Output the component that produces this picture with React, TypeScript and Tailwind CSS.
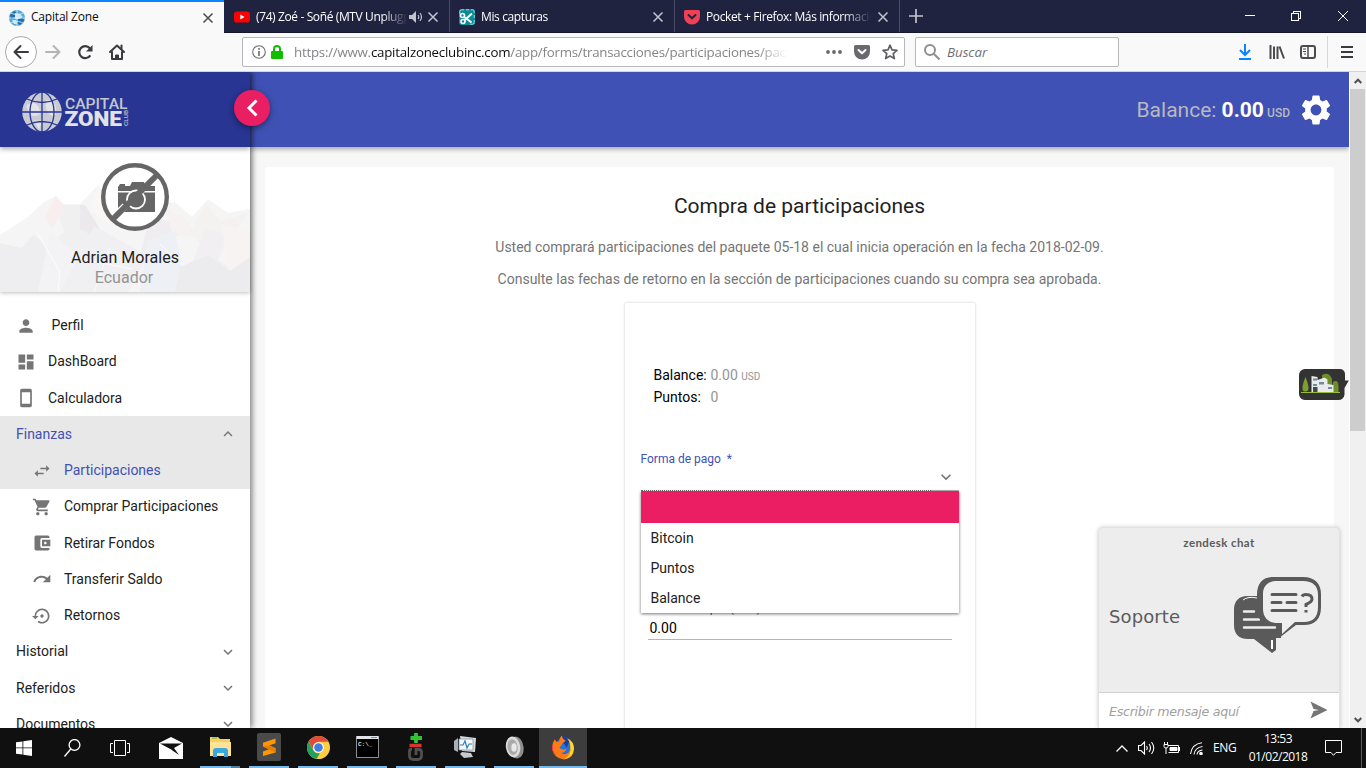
import type { ReactNode } from 'react';
import {
  MdAccountBalanceWallet,
  MdDashboard,
  MdExpandLess,
  MdExpandMore,
  MdPerson,
  MdRedo,
  MdSettings,
  MdSettingsBackupRestore,
  MdShoppingCart,
  MdStayCurrentPortrait,
  MdSwapHoriz,
} from 'react-icons/md';

function CloseIcon({ className }: { className: string }) {
  return (
    <svg viewBox="0 0 12 12" className={`h-3 w-3 shrink-0 ${className}`} fill="none" stroke="currentColor" strokeWidth="1.5">
      <path d="M1.5 1.5l9 9M10.5 1.5l-9 9" />
    </svg>
  );
}

function GlobeFavicon() {
  return (
    <svg viewBox="0 0 16 16" className="h-4 w-4 shrink-0">
      <circle cx="8" cy="8" r="8" fill="#5aa9d6" />
      <path d="M1 5l4-4 3 2-2 4-4 2zM9 9l5-2 1 4-4 4-3-2z" fill="#1f6fb0" />
      <path d="M6 3l5 1 3 3-4 2-4 0zM3 10l4 0 1 4-3 0z" fill="#c9e8f5" />
      <path d="M8 0v16M0 8h16M2 3c4 2 8 2 12 0M2 13c4-2 8-2 12 0" stroke="#e4f4fb" strokeWidth=".8" fill="none" />
    </svg>
  );
}

function YoutubeIcon() {
  return (
    <svg viewBox="0 0 16 12" className="h-3 w-4 shrink-0">
      <rect y=".5" width="16" height="11" rx="2.8" fill="#f00" />
      <path d="M6.3 3.5v5l4.2-2.5z" fill="#fff" />
    </svg>
  );
}

function ScreenshotIcon() {
  return (
    <svg viewBox="0 0 16 16" className="h-4 w-4 shrink-0">
      <rect width="16" height="16" rx="2.5" fill="#0b8a99" />
      <path d="M.8 5V2.5A1.7 1.7 0 0 1 2.500.8H5M7 .8h3M12 .8h1.500a1.700 1.700 0 0 1 1.700 1.700V4M15.200 6v3M15.200 11v2.500a1.700 1.700 0 0 1-1.700 1.700H11" stroke="#8fe0e6" strokeWidth="1" fill="none" />
      <circle cx="3.500" cy="6.500" r="2" fill="none" stroke="#fff" strokeWidth="1.600" />
      <circle cx="4" cy="12.500" r="2" fill="none" stroke="#fff" strokeWidth="1.600" />
      <path d="M5 7.800l7.500 5.700M5.500 11.200L13 4.500" stroke="#fff" strokeWidth="2" />
    </svg>
  );
}

function PocketIcon({ className, check }: { className: string; check: string }) {
  return (
    <svg viewBox="0 0 16 16" className={`h-4 w-4 shrink-0 ${className}`}>
      <path d="M1.600 1h12.800A1.600 1.600 0 0 1 16 2.600V7.500a8 8 0 0 1-16 0V2.600A1.600 1.600 0 0 1 1.600 1z" fill="currentColor" />
      <path d="M4.500 6l3.500 3.300L11.500 6" stroke={check} strokeWidth="2" fill="none" strokeLinecap="round" strokeLinejoin="round" />
    </svg>
  );
}

function Tab({ icon, title, extra }: { icon: ReactNode; title: string; extra?: ReactNode }) {
  return (
    <div className="flex h-full w-[225px] items-center border-r border-[#4a4c66] pt-0.5 pr-2.5 pl-[9px] text-white">
      {icon}
      <span className="ml-[6px] min-w-0 flex-1 overflow-hidden text-[12px] whitespace-nowrap [mask-image:linear-gradient(to_right,#000_82%,transparent_99%)]">{title}</span>
      {extra}
      <CloseIcon className="ml-1 text-[#c4c4cd]" />
    </div>
  );
}

function TabStrip() {
  return (
    <div className="flex h-[33px] shrink-0 border-b border-[#15172c] bg-[#202340] font-['Open_Sans','Noto_Sans',sans-serif] tracking-[-0.38px]">
      <div className="mr-px flex h-[33px] w-[224px] items-center border-t-2 border-[#0a84ff] bg-[#f9f9f9] pr-2.5 pl-[9px]">
        <GlobeFavicon />
        <span className="-mt-px ml-[6px] flex-1 text-[12px] tracking-[-0.2px] text-[#0c0c0d]">Capital Zone</span>
        <CloseIcon className="text-[#4a4a4f]" />
      </div>
      <Tab
        icon={<YoutubeIcon />}
        title="(74) Zoé - Soñé (MTV Unplugged)"
        extra={
          <svg viewBox="0 0 14 12" className="h-3 w-3.5 shrink-0 text-[#c4c4cd]" fill="none" stroke="currentColor">
            <path d="M0 4h3l4-4v12L3 8H0z" fill="currentColor" stroke="none" />
            <path d="M9 4q1.500 2 0 4M11 2q3 4 0 8" strokeWidth="1.200" />
          </svg>
        }
      />
      <Tab icon={<ScreenshotIcon />} title="Mis capturas" />
      <Tab icon={<PocketIcon className="text-[#ef4056]" check="#202340" />} title="Pocket + Firefox: Más información" />
      <div className="flex w-[32px] items-center justify-center">
        <svg viewBox="0 0 14 14" className="h-3.5 w-3.5" stroke="#c4c4cd" strokeWidth="1.700">
          <path d="M7 0v14M0 7h14" />
        </svg>
      </div>
      <div className="flex-1" />
      <div className="flex w-[139px] items-center justify-around text-white">
        <svg viewBox="0 0 10 10" className="h-2.5 w-2.5" stroke="currentColor" shapeRendering="crispEdges"><path d="M0 4.500h10" /></svg>
        <svg viewBox="0 0 10 10" className="h-2.5 w-2.5" stroke="currentColor" fill="none" shapeRendering="crispEdges"><path d="M.5 2.500h7v7h-7zM2.500 2.500v-2h7v7h-2" /></svg>
        <svg viewBox="0 0 10 10" className="h-2.5 w-2.5" stroke="currentColor"><path d="M0 0l10 10M10 0L0 10" /></svg>
      </div>
    </div>
  );
}

function Toolbar() {
  return (
    <div className="flex h-[39px] shrink-0 items-center border-b border-[#d5d5d8] bg-[#f9f9fa] font-['Open_Sans','Noto_Sans',sans-serif] text-[#4a4a4f]">
      <div className="flex w-[242px] items-center pl-[5px]">
        <div className="flex h-8 w-8 items-center justify-center rounded-full border border-[#a9a9ad] bg-white">
          <svg viewBox="0 0 16 16" className="h-4 w-4" fill="none" stroke="#3b3b3f" strokeWidth="2" strokeLinecap="round" strokeLinejoin="round"><path d="M15 8H1.500M7.500 2L1.500 8l6 6" /></svg>
        </div>
        <svg viewBox="0 0 16 16" className="ml-2 h-4 w-4" fill="none" stroke="#b5b5b8" strokeWidth="2" strokeLinecap="round" strokeLinejoin="round"><path d="M1 8h13.500M8.500 2l6 6-6 6" /></svg>
        <svg viewBox="0 0 16 16" className="ml-4 h-4 w-4" fill="none" stroke="#3b3b3f" strokeWidth="2.200"><path d="M13.300 11.300A6 6 0 1 1 12.800 4.200" /><path d="M15.500 1v6.500H9z" fill="#3b3b3f" stroke="none" /></svg>
        <svg viewBox="0 0 16 16" className="ml-4 h-4 w-4" fill="none" stroke="#3b3b3f" strokeWidth="2" strokeLinejoin="round" strokeLinecap="round"><path d="M1 8l7-6.500L15 8" /><path d="M3 8v7h10V8" /><path d="M6.500 15v-4h3v4z" fill="#3b3b3f" strokeWidth="1" /><path d="M12.500 1.500v3" /></svg>
      </div>
      <div className="flex h-[30px] w-[663px] items-center rounded-[2px] border border-[#b8b8bc] bg-white pr-1.5 pl-[9px]">
        <svg viewBox="0 0 14 14" className="h-3.5 w-3.5" fill="none" stroke="#6a6a6e"><circle cx="7" cy="7" r="6.300" strokeWidth="1.100" /><path d="M7 6v5M7 3v1.700" strokeWidth="1.600" /></svg>
        <svg viewBox="0 0 12 14" className="ml-[5px] h-3.5 w-3" fill="#12bc00"><rect y="6" width="12" height="8" rx="1" /><path d="M3 7V4a3 3 0 0 1 6 0v3" fill="none" stroke="#12bc00" strokeWidth="2" /></svg>
        <span className="mt-0.5 ml-[11px] w-[498px] overflow-hidden text-[13.300px] tracking-[-0.240px] whitespace-nowrap text-[#858588] [mask-image:linear-gradient(to_right,#000_93%,transparent_99%)]">
          https://www.<span className="text-[#0c0c0d]">capitalzoneclubinc.com</span>/app/forms/transacciones/participaciones/pacto
        </span>
        <svg viewBox="0 0 16 4" className="ml-auto h-1 w-4" fill="#6a6a6e"><circle cx="2" cy="2" r="1.900" /><circle cx="8" cy="2" r="1.900" /><circle cx="14" cy="2" r="1.900" /></svg>
        <PocketIcon className="ml-3 text-[#6a6a6e]" check="#fff" />
        <svg viewBox="0 0 16 16" className="ml-3 h-4 w-4" fill="none" stroke="#5f5f63" strokeWidth="1.700" strokeLinejoin="round"><path d="M8 1.200l2 4.600 5 .5-3.800 3.300 1.200 5L8 12l-4.400 2.600 1.200-5L1 6.300l5-.5z" /></svg>
      </div>
      <div className="ml-[10px] flex h-[30px] w-[204px] items-center rounded-[2px] border border-[#b8b8bc] bg-white pl-2">
        <svg viewBox="0 0 16 16" className="h-4 w-4" fill="none" stroke="#8f8f93" strokeWidth="2"><circle cx="6" cy="6" r="5" /><path d="M9.500 9.500l6 6" /></svg>
        <span className="mt-0.5 ml-[7px] text-[13.300px] text-[#707073] italic">Buscar</span>
      </div>
      <div className="ml-auto flex h-full items-center">
        <svg viewBox="0 0 12 16" className="h-4 w-3" fill="none" stroke="#0a84ff" strokeWidth="2"><path d="M6 0v10.500M1 6l5 5 5-5M0 15h12" /></svg>
        <svg viewBox="0 0 16 16" className="ml-[18px] h-4 w-4" stroke="#4a4a4f" strokeWidth="2"><path d="M1.500 1v14M5 2.500V15M8.500 2.500V15M10.500 2.500L15 14.500" /></svg>
        <svg viewBox="0 0 16 14" className="ml-[15px] h-3.5 w-4" fill="none" stroke="#4a4a4f" strokeWidth="2"><rect x="1" y="1" width="14" height="12" rx="2" /><path d="M8 1v12" strokeWidth="1.500" /><path d="M3 4h3M3 6.500h3M4 9h2" strokeWidth="1" /></svg>
        <div className="ml-[11px] h-8 w-px bg-[#d7d7db]" />
        <svg viewBox="0 0 12 12" className="mr-[13px] ml-[13px] h-3 w-3" stroke="#3b3b3f" strokeWidth="2"><path d="M0 1h12M0 6h12M0 11h12" /></svg>
      </div>
    </div>
  );
}

function Logo() {
  return (
    <svg viewBox="0 0 108 42" className="h-[42px] w-[108px]">
      <circle cx="20" cy="20" r="19.800" fill="#c9cbd2" />
      <path d="M4 14q6-5 10-2t4 10q-6 4-10 0zM24 8q8 0 10 8t-4 8q-8-4-6-16zM12 28l8 2-3 8z" fill="#e2e3e6" />
      <g fill="none" stroke="#283593" strokeWidth="1.300">
        <path d="M20 0v40M0 20h40M5 7q15 7 30 0M5 33q15-7 30 0" />
        <ellipse cx="20" cy="20" rx="12" ry="20" />
      </g>
      <text x="43" y="16.500" fontFamily="Roboto, sans-serif" fontSize="14" fontWeight="500" textLength="62.500" lengthAdjust="spacingAndGlyphs" fill="#c4c6cf">CAPITAL</text>
      <text x="42.500" y="33.800" fontFamily="Roboto, sans-serif" fontSize="20.500" fontWeight="900" textLength="57.500" lengthAdjust="spacingAndGlyphs" fill="#e1e2e6">ZONE</text>
      <text transform="translate(105.800 34) rotate(-90)" fontFamily="Roboto, sans-serif" fontSize="6" fontWeight="500" textLength="16" lengthAdjust="spacingAndGlyphs" fill="#c4c6cf">CLUB</text>
    </svg>
  );
}

function Mountains() {
  return (
    <svg viewBox="0 0 250 145" preserveAspectRatio="none" className="absolute inset-0 h-full w-full">
      <path d="M0 88L28 70 44 55 56 49 64 57 80 57 98 38 112 60 175 55 192 70 208 52 228 66 250 62V145H0z" fill="#f6f5f6" />
      <path d="M0 96l22 5 12-14 20 20-10 38H0z" fill="#eeedf0" />
      <path d="M54 58l10 27-20 18 42 6 8-30-14-21z" fill="#f1f0f1" />
      <path d="M50 84l34 30-12 31H38z" fill="#f3f3f5" />
      <path d="M56 49l9 12-13 20-8-10z" fill="#f8eeee" />
      <path d="M80 58h5l25 40-30-16z" fill="#ebe9eb" />
      <path d="M98 38l12 40-20-15z" fill="#fbf6f6" />
      <path d="M94 79l54 30-20 36H60z" fill="#f0eff2" />
      <path d="M150 68l40 14-30 15-22 20z" fill="#efedef" />
      <path d="M165 60l21 12 14 20-28-6z" fill="#f7f2f2" />
      <path d="M147 94l28-10 12 61h-47z" fill="#edf1f6" />
      <path d="M190 85l16-28 14 17 28-8-20 28-12 22z" fill="#f4f1f1" />
      <path d="M206 82l20 6-8 25 32 20v12h-70z" fill="#f1eff1" />
      <path d="M222 78l28 6v34l-22 6z" fill="#f7f3f2" />
      <path d="M38 87l22 38-2 20M110 101l-16 44M160 97l40 38M72 110l60 12" stroke="#fff" strokeWidth="1" fill="none" opacity=".8" />
      <path d="M180 120l28-12 22 16 20-14v35h-75z" fill="#ececef" />
    </svg>
  );
}

function NoCamera() {
  return (
    <svg viewBox="0 0 68 68" className="relative h-[68px] w-[68px]">
      <circle cx="34" cy="34" r="31.800" fill="#fff" stroke="#666" strokeWidth="4.400" />
      <path d="M19 21h5v2h5l2-4h12l2 4h9v5H17v-4z" fill="#666" />
      <path d="M17 29.500h37v19.500H17z" fill="#666" />
      <circle cx="35" cy="36.500" r="9" fill="#666" stroke="#fff" strokeWidth="1.800" />
      <path d="M24 43L14 53M44 20l8-8" stroke="#fff" strokeWidth="7" />
      <circle cx="35" cy="36.500" r="7.500" fill="#666" />
      <path d="M11.500 56.500L56.500 11.500" stroke="#666" strokeWidth="6" />
    </svg>
  );
}

function NavItem({ icon, label, sub, active, open }: { icon?: ReactNode; label: string; sub?: boolean; active?: boolean; open?: boolean }) {
  return (
    <div className={`flex h-[36.250px] shrink-0 items-center text-[14px] ${active ? 'bg-[#e8e8e8] text-[#3f51b5]' : 'text-[#212121]'} ${sub ? 'pl-8' : 'pl-4'}`}>
      {icon && <span className="flex w-8 shrink-0 text-[20px] text-[#757575]">{icon}</span>}
      <span className="flex-1">{label}</span>
      {open !== undefined && <span className="mr-[13px] text-[18px] text-[#757575]">{open ? <MdExpandLess /> : <MdExpandMore />}</span>}
    </div>
  );
}

function Sidebar() {
  return (
    <aside className="relative z-20 flex w-[250px] shrink-0 flex-col bg-white shadow-[2px_0_6px_rgba(0,0,0,0.5)]">
      <div className="relative z-10 flex h-[75px] shrink-0 bg-[#283593] pt-5 pl-[22px] shadow-[0_2px_5px_rgba(0,0,0,0.35)]">
        <Logo />
      </div>
      <div className="relative flex h-[145px] shrink-0 flex-col items-center pt-4 shadow-[0_1px_4px_rgba(0,0,0,0.25)]">
        <Mountains />
        <div className="ml-5"><NoCamera /></div>
        <p className="relative mt-[17px] text-[16px] leading-[20px] text-[#212121]">Adrian Morales</p>
        <p className="relative -ml-0.5 text-[16px] leading-[20px] text-[#949494]">Ecuador</p>
      </div>
      <nav className="flex flex-col overflow-hidden pt-[15.600px]">
        <NavItem icon={<MdPerson />} label={'\u00a0Perfil'} />
        <NavItem icon={<MdDashboard />} label="DashBoard" />
        <NavItem icon={<MdStayCurrentPortrait />} label="Calculadora" />
        <NavItem label="Finanzas" active open />
        <NavItem sub icon={<MdSwapHoriz />} label="Participaciones" active />
        <NavItem sub icon={<MdShoppingCart />} label="Comprar Participaciones" />
        <NavItem sub icon={<MdAccountBalanceWallet />} label="Retirar Fondos" />
        <NavItem sub icon={<MdRedo />} label="Transferir Saldo" />
        <NavItem sub icon={<MdSettingsBackupRestore />} label="Retornos" />
        <NavItem label="Historial" open={false} />
        <NavItem label="Referidos" open={false} />
        <NavItem label="Documentos" open={false} />
      </nav>
      <button className="absolute top-[18px] left-[234px] z-20 flex h-9 w-9 items-center justify-center rounded-full bg-[#e91e63] text-white shadow-[0_2px_6px_rgba(0,0,0,0.45)]">
        <svg viewBox="0 0 12 18" className="h-[18px] w-3" fill="none" stroke="currentColor" strokeWidth="3"><path d="M10.500 1.500L3 9l7.500 7.500" /></svg>
      </button>
    </aside>
  );
}

function PaymentCard() {
  return (
    <div className="relative mt-[14px] flex h-[460px] w-[350px] flex-col rounded-[2px] bg-white px-4 shadow-[0_0_3px_rgba(0,0,0,0.22)]">
      <div className="mt-[61px] ml-[13px] grid grid-cols-[57px_1fr] grid-rows-[22px_22px] text-[14px] leading-[22px] text-black">
        <span>Balance:</span>
        <span className="text-[#949494]">0.00 <span className="text-[10px] leading-none">USD</span></span>
        <span>Puntos:</span>
        <span className="text-[#949494]">0</span>
      </div>
      <div className="mt-[43px] text-[12px] leading-4 text-[#3f51b5]">Forma de pago&nbsp; *</div>
      <div className="flex h-6">
        <div className="h-full w-[290px] border-b border-dotted border-[#777]" />
        <div className="flex h-full w-7 items-center justify-center border-b border-[#bbb] pb-[3px] pl-[2px] text-[20px] text-[#757575]"><MdExpandMore className="shrink-0" /></div>
      </div>
      <div className="mt-[109px] ml-2 text-[12px] leading-4 text-[#3f51b5]">Monto compra (USD)</div>
      <div className="mr-[7px] ml-[7px] flex h-[24px] items-center border-b border-[#b5b5b5] pt-0.5 pl-[2px] text-[14px] text-black">0.00</div>
      <ul className="absolute top-[188px] left-4 z-10 w-[318px] bg-white text-[14px] text-[#212121] shadow-[0_1px_3px_rgba(0,0,0,0.55)]">
        <li className="h-8 bg-[#ec1e63]" />
        <li className="flex h-[30px] items-center pl-[10px]">Bitcoin</li>
        <li className="flex h-[30px] items-center pl-[10px]">Puntos</li>
        <li className="flex h-[30px] items-center pl-[10px]">Balance</li>
      </ul>
    </div>
  );
}

function ChatWidget() {
  return (
    <div className="absolute right-[26px] bottom-0 z-30 flex h-[201px] w-[242px] flex-col overflow-hidden rounded-t-[5px] border border-b-0 border-[#e2e2e2] bg-[#ededed] font-['DejaVu_Sans',sans-serif] text-[#5b5b5b] shadow-[0_0_4px_rgba(0,0,0,0.2)]">
      <div className="mt-[7px] text-center font-['Lato',sans-serif] text-[11.500px] leading-4 font-bold tracking-[0.4px]">zendesk chat</div>
      <div className="flex flex-1 items-center justify-between pr-[16px] pb-[10px] pl-[10px]">
        <span className="text-[18px] tracking-[0.1px]">Soporte</span>
        <svg viewBox="0 0 90 78" className="-mt-1 h-[78px] w-[90px]">
          <path d="M14 20h20v24h14v18h-5v12l-4 3-18-14h-6C5 63 1 57 1 49V34C1 25 6 20 14 20z" fill="#5a5a5a" />
          <path d="M10 24q5-4 14-2" stroke="#fff" strokeWidth="1" fill="none" />
          <path d="M39 64v9" stroke="#fff" strokeWidth="2" />
          <path d="M11 35.500h10M11 43.500h15M11 51.500h31" stroke="#eee" strokeWidth="2.400" strokeLinecap="round" />
          <path d="M40 1h30c12 0 18 7 18 17v13c0 12-6 18-17 18h-8L46 62V49h-6C29 49 24 42 24 34V19C24 7 30 1 40 1z" fill="#5a5a5a" />
          <path d="M44 5h26c10 0 15 5 15 14v12c0 10-5 15-14 15h-9L49 58V47h-5c-9 0-14-6-14-14V18C30 10 35 5 44 5z" fill="#eee" />
          <path d="M39 18.500h24M39 26.500h9M54 26.500h9M39 34.500h24" stroke="#5a5a5a" strokeWidth="3" strokeLinecap="round" />
          <path d="M69 20.500q1-2 4-2 6 0 6 4.500 0 3-6 5.500v2.500M73 34v2.500" stroke="#5a5a5a" strokeWidth="3" fill="none" />
        </svg>
      </div>
      <div className="flex h-[36px] items-center justify-between border-t border-[#d2d2d2] bg-white pr-[11px] pl-[10px]">
        <span className="mt-[3px] text-[12.600px] tracking-[-0.270px] text-[#a0a0a0] italic">Escribir mensaje aquí</span>
        <svg viewBox="0 0 18 18" className="-mt-px h-[18px] w-[18px]" fill="#757575"><path d="M.5.5L17.500 9 .5 17.500 3.500 10 9 9 3.500 8z" /></svg>
      </div>
    </div>
  );
}

function HouseBadge() {
  return (
    <svg viewBox="0 0 50 32" className="absolute top-[297px] right-[17px] z-30 h-8 w-[50px]">
      <path d="M6 0h35a5 5 0 0 1 5 5v6.500l3.800 0L45.500 19v6.500a6 6 0 0 1-6 5.500H6a6 6 0 0 1-6-6V6a6 6 0 0 1 6-6z" fill="#333" />
      <path d="M6.500 8q-3 7-3 11t3 3.500q3 0 3-3.500T6.500 8z" fill="#7d9f2c" />
      <path d="M23 6q7-4 10 4v12H23zM34 13q5-3 5.500 4V23H33z" fill="#6d8d27" />
      <path d="M12.500 7l6 1v3l7-2.500 3 2V15l6 1v7H12.500z" fill="#e8eaec" />
      <path d="M14 9.500h4v2h-4zM20 13h5v2.500h-5zM14 15h4v2h-4zM29 18h4v2h-4z" fill="#6e8d96" />
      <path d="M14 18h4.500v5H14z" fill="#42474a" />
      <path d="M2 23.500h39" stroke="#9abb3a" strokeWidth="1.200" />
    </svg>
  );
}

function ScrollArrow({ down }: { down?: boolean }) {
  return (
    <div className="flex h-[17px] items-center justify-center">
      <svg viewBox="0 0 8 6" className="h-1.5 w-2" fill="none" stroke="#505050" strokeWidth="2"><path d={down ? 'M.7 1l3.300 3.300L7.300 1' : 'M.7 5L4 1.700 7.300 5'} /></svg>
    </div>
  );
}

function Slot({ children, running, active, split }: { children: ReactNode; running?: boolean; active?: boolean; split?: boolean }) {
  return (
    <div className={`flex h-full w-12 shrink-0 flex-col items-center ${running && !active ? 'mr-px' : ''} ${active ? 'bg-[#3d3d3e]' : ''}`}>
      <div className="flex flex-1 items-center justify-center">{children}</div>
      {running && (
        <div className={`flex h-0.5 bg-[#76b9ed] ${active ? 'w-full' : 'w-10'}`}>
          {split && <div className="ml-auto w-[9px] bg-[#527f9f]" />}
        </div>
      )}
    </div>
  );
}

function Taskbar() {
  return (
    <div className="flex h-10 shrink-0 bg-[#101010] font-['Open_Sans','Noto_Sans',sans-serif] text-white">
      <Slot>
        <svg viewBox="0 0 16 16" className="h-4 w-4" fill="#fff"><path d="M0 2.300l6.500-.9v6.100H0zM7.300 1.300L16 0v7.500H7.300zM0 8.300h6.500v6.300L0 13.700zM7.300 8.300H16V16l-8.700-1.300z" /></svg>
      </Slot>
      <Slot>
        <svg viewBox="0 0 17 18" className="h-[18px] w-[17px]" fill="none" stroke="#fff" strokeWidth="1.300"><circle cx="10.500" cy="6" r="5.400" /><path d="M6.800 10L.5 17.500" /></svg>
      </Slot>
      <Slot>
        <svg viewBox="0 0 20 16" className="h-4 w-5" fill="none" stroke="#fff" strokeWidth="1"><path d="M4.500.5h11v15h-11zM3 3.500H.5v9H3M17 3.500h2.500v9H17" /></svg>
      </Slot>
      <div className="w-[3px]" />
      <Slot>
        <svg viewBox="0 0 24 22" className="h-[22px] w-6"><path d="M12 0l12 6v16H0V6z" fill="#fff" /><path d="M1 6.500h22L15 11l5 7-8-5.500z" fill="#111" /><path d="M0 7l13 6-1 9H0z" fill="#fff" /></svg>
      </Slot>
      <div className="w-px" />
      <Slot running split>
        <svg viewBox="0 0 22 20" className="h-5 w-[22px]"><path d="M1 0h8l2 2h10v17H1z" fill="#f7cf62" /><path d="M1 5h21v14H1z" fill="#fde394" /><path d="M4 20v-6q0-3 3-3h9q3 0 3 3v6h-4v-4H8v4z" fill="#3ba7e0" /><path d="M3 1h5" stroke="#55bb44" /></svg>
      </Slot>
      <Slot running>
        <svg viewBox="0 0 24 28" className="h-7 w-6"><rect width="24" height="28" rx="2" fill="#4a4a4a" /><path d="M18.500 5.500v4.700l-6.500 2.300 6.500 2.600v4.400L6 23v-4.500l6-2.300-6-2.700V9.700z" fill="#ff9800" /><path d="M6 13.500l6-1.300 6.500 3v4.200l-7-3.200z" fill="#e87d00" /></svg>
      </Slot>
      <Slot running>
        <svg viewBox="0 0 24 24" className="h-[23px] w-[23px]"><circle cx="12" cy="12" r="12" fill="#ffcd40" /><path d="M1.600 6A12 12 0 0 1 22.400 6H12a6 6 0 0 0-5.500 8z" fill="#e14b3c" /><path d="M1.600 6l5.200 9.100A6 6 0 0 0 13.500 17.800L10 23.900A12 12 0 0 1 1.600 6z" fill="#24a05b" /><circle cx="12" cy="12" r="5.600" fill="#fff" /><circle cx="12" cy="12" r="4.500" fill="#3f7de0" /></svg>
      </Slot>
      <Slot running>
        <svg viewBox="0 0 23 22" className="h-[22px] w-[23px]"><rect width="23" height="22" rx="1" fill="#8d9094" /><rect x=".5" y="0" width="22" height="3" fill="#e2e5e9" /><rect x="1" y="3" width="21" height="18" fill="#000" /><text x="2" y="10" fontSize="6" fontFamily="Liberation Mono, monospace" fontWeight="700" fill="#ddd">C:\_</text><path d="M15 1.500h6" stroke="#6b8db8" /></svg>
      </Slot>
      <Slot running>
        <svg viewBox="0 0 16 28" className="h-7 w-4"><path d="M8 0v10M2.500 5H14" stroke="#34c234" strokeWidth="3.800" /><path d="M1.500 12.500h12" stroke="#d93434" strokeWidth="3.500" /><path d="M4 16.500H2.500Q1.500 16.500 1.500 18v5q0 3.500 4 3.500h4q4 0 4-4V19q0-2.500-3-2.500H8V22" stroke="#505050" strokeWidth="2.800" fill="none" /></svg>
      </Slot>
      <Slot running>
        <svg viewBox="0 0 24 24" className="h-6 w-6"><path d="M7 1l16 2-1 14-13-1z" fill="#d5dade" /><path d="M1 6l4-3v14l-4-2z" fill="#a9b0b6" /><path d="M6 4h14v11H6z" fill="#f5f8fa" stroke="#8a949c" strokeWidth=".8" /><path d="M7 10h3l2-4 2 7 2-4h3" stroke="#2e7fc0" strokeWidth="1.200" fill="none" /><path d="M9 17l9 1 2 4-9 1-4-4z" fill="#c5cace" /></svg>
      </Slot>
      <Slot running>
        <svg viewBox="0 0 22 24" className="h-[23px] w-[21px]"><ellipse cx="13" cy="12" rx="7.500" ry="11.500" fill="#8e8e8e" transform="rotate(-8 13 12)" /><ellipse cx="9.500" cy="11.500" rx="7.500" ry="11" fill="#dcdcdc" transform="rotate(-8 9.500 11.500)" /><ellipse cx="9" cy="11.500" rx="5.300" ry="8.300" fill="#aaa" transform="rotate(-8 9 11.500)" /><ellipse cx="10.500" cy="12" rx="2.800" ry="4.500" fill="#e9e9e9" /></svg>
      </Slot>
      <Slot running active>
        <svg viewBox="0 0 24 26" className="h-[25px] w-[22px]"><circle cx="12.500" cy="12.500" r="9.500" fill="#2473d8" /><path d="M9 3q6-5 11 1l-4 9z" fill="#173e9c" /><path d="M3 4l2 3 3-.5q-.5-3.500 3-6.500 0 4 4 5.500l-4 3.500q0 2-3 4 3 4 8 1-2 5-7 5 9 4 11-5 1-6-4-11 7 3 8 11 0 11-11 12Q2 25 0 14 0 8 3 4z" fill="#ff7a16" /><path d="M17 3q7 4 7 11-1 10-11 12 9-5 7-14 0-5-3-9z" fill="#ffd52e" /><path d="M1 10q-1 8 5 13Q-1 18 0 12z" fill="#ff2f50" /></svg>
      </Slot>
      <div className="ml-auto flex items-center">
        <svg viewBox="0 0 12 7" className="h-[7px] w-3" fill="none" stroke="#fff" strokeWidth="1.300"><path d="M.5 6.500L6 1l5.500 5.500" /></svg>
        <svg viewBox="0 0 17 14" className="ml-2.5 h-3.5 w-[17px]" fill="none" stroke="#fff" strokeWidth="1.100"><path d="M.5 4.500H3L6.500 1v12L3 9.500H.5zM8.500 5q1.500 2 0 4M11 3q3 4 0 8M13.500 1q4.500 6 0 12" /></svg>
        <svg viewBox="0 0 17 12" className="ml-[8px] h-3 w-[17px]" fill="none" stroke="#fff"><path d="M5 3.500h10.500v7H5.500M1.500 0v2M4.500 0v2M1 2.500h4v2q0 1.500-2 1.500T1 4.500zM3 6v6" /><path d="M7 5.500h7v3H7z" fill="#fff" /><path d="M16.500 5v4" /></svg>
        <svg viewBox="0 0 13 13" className="ml-[10px] h-[13px] w-[13px]" fill="none" stroke="#fff" strokeWidth="1.100"><path d="M.5 12Q2 2 12 .8M4 12.500Q5 5.500 12.500 4.500M7 12.500q.5-4 5.500-4.500" /><circle cx="11" cy="11.500" r="1.200" fill="#fff" /></svg>
        <span className="ml-[10px] w-[24px] text-[12px] tracking-[-0.400px]">ENG</span>
        <div className="ml-[11px] w-[60px] text-center text-[12px] leading-[18px] tracking-[-0.500px] whitespace-nowrap">
          <div>13:53</div>
          <div>01/02/2018</div>
        </div>
        <svg viewBox="0 0 17 16" className="ml-[17px] h-4 w-[17px]" fill="none" stroke="#fff"><path d="M.5.5h16v12H11l-2.500 2.800L6 12.500H.5z" /></svg>
        <div className="ml-[19px] h-10 w-px bg-[#5a5a5a]" />
        <div className="w-1" />
      </div>
    </div>
  );
}

export default function App() {
  return (
    <div className="flex h-[768px] w-[1366px] flex-col overflow-hidden font-['Roboto',sans-serif]">
      <TabStrip />
      <Toolbar />
      <div className="relative flex h-[656px] shrink-0 overflow-hidden">
        <Sidebar />
        <main className="flex flex-1 flex-col overflow-hidden bg-[#f7f7f7]">
          <header className="z-10 flex h-[75px] shrink-0 items-center justify-end bg-[#3f51b5] pr-[15px] text-[#b9b9bd] shadow-[0_2px_5px_rgba(0,0,0,0.35)]">
            <p className="mt-[3px] text-[21px]">Balance: <b className="font-bold text-white">0.00</b> <span className="-ml-0.5 text-[12px] font-medium">USD</span></p>
            <MdSettings className="ml-[8px] h-9 w-9 text-white" />
          </header>
          <section className="mt-5 mr-[15px] ml-[15px] flex flex-col items-center rounded-[3px] bg-white">
            <h1 className="mt-[25px] text-[21px] leading-7 text-[#212121]">Compra de participaciones</h1>
            <p className="mt-[17px] text-[14px] leading-5 text-[#757575]">Usted comprará participaciones del paquete 05-18 el cual inicia operación en la fecha 2018-02-09.</p>
            <p className="mt-3 text-[14px] leading-5 text-[#757575]">Consulte las fechas de retorno en la sección de participaciones cuando su compra sea aprobada.</p>
            <PaymentCard />
          </section>
        </main>
        <div className="flex w-[17px] shrink-0 flex-col border-l border-white bg-[#f0f0f0]">
          <ScrollArrow />
          <div className="mr-px h-[342px] bg-[#cdcdcd]" />
          <div className="flex-1" />
          <ScrollArrow down />
        </div>
        <HouseBadge />
        <ChatWidget />
      </div>
      <Taskbar />
    </div>
  );
}
